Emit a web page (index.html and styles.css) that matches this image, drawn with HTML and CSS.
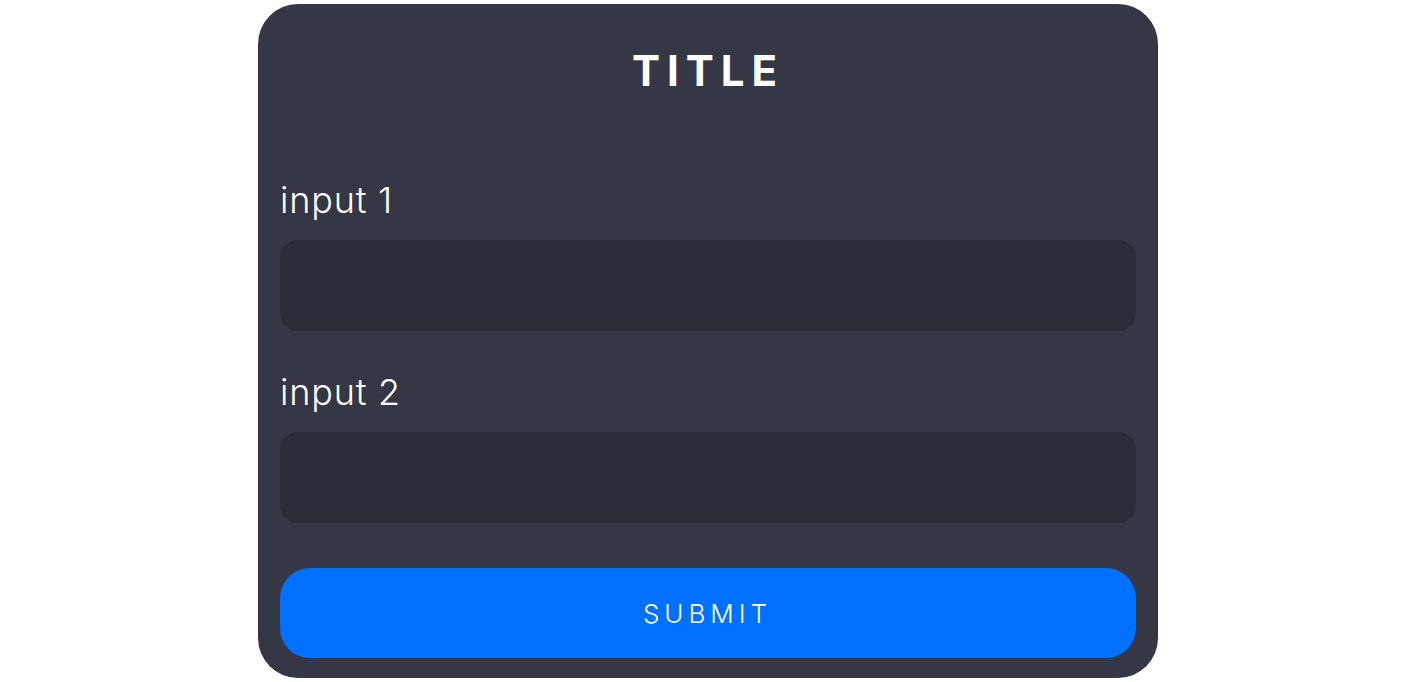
FILE: index.html
```html
<!DOCTYPE html>
<html lang="en">
<head>
<meta charset="utf-8">
<title>Form</title>
<link rel="stylesheet" href="styles.css">
</head>
<body>
<main class="page">
  <form class="card">
    <h1 class="title">TITLE</h1>
    <div class="field">
      <label class="label" for="in1">input 1</label>
      <input class="input" id="in1" type="text">
    </div>
    <div class="field">
      <label class="label" for="in2">input 2</label>
      <input class="input" id="in2" type="text">
    </div>
    <button class="submit" type="button">SUBMIT</button>
  </form>
</main>
</body>
</html>
```
FILE: styles.css
```css
* { box-sizing: border-box; }
html, body { margin: 0; padding: 0; background: #ffffff; }
body { font-family: Inter, "Liberation Sans", sans-serif; }
.page {
  display: flex;
  justify-content: center;
  padding-top: 4px;
}
.card {
  width: 900px;
  background: #353844;
  border-radius: 40px;
  padding: 0 22px 20px;
  display: flex;
  flex-direction: column;
}
.title {
  margin: 0;
  height: 136px;
  flex-shrink: 0;
  padding-top: 46px;
  text-align: center;
  color: #ffffff;
  font-size: 42px;
  line-height: 42px;
  font-weight: 700;
  letter-spacing: 7px;
}
.field {
  display: flex;
  flex-direction: column;
}
.field + .field { margin-top: 45px; }
.label {
  color: #ffffff;
  font-size: 36px;
  font-weight: 300;
  letter-spacing: 0.8px;
  line-height: 40px;
  height: 100px;
  display: flex;
  align-items: flex-end;
  padding-bottom: 20px;
}
.field + .field .label { height: 56px; }
.input {
  height: 91px;
  border: none;
  border-radius: 18px;
  background: #2a2d38;
  outline: none;
}
.submit {
  margin-top: 45px;
  height: 90px;
  flex-shrink: 0;
  border: none;
  border-radius: 30px;
  background: #0070ff;
  color: #ffffff;
  font-family: Inter, "Liberation Sans", sans-serif;
  font-size: 26px;
  font-weight: 300;
  letter-spacing: 5px;
  padding-left: 5px;
}
```
